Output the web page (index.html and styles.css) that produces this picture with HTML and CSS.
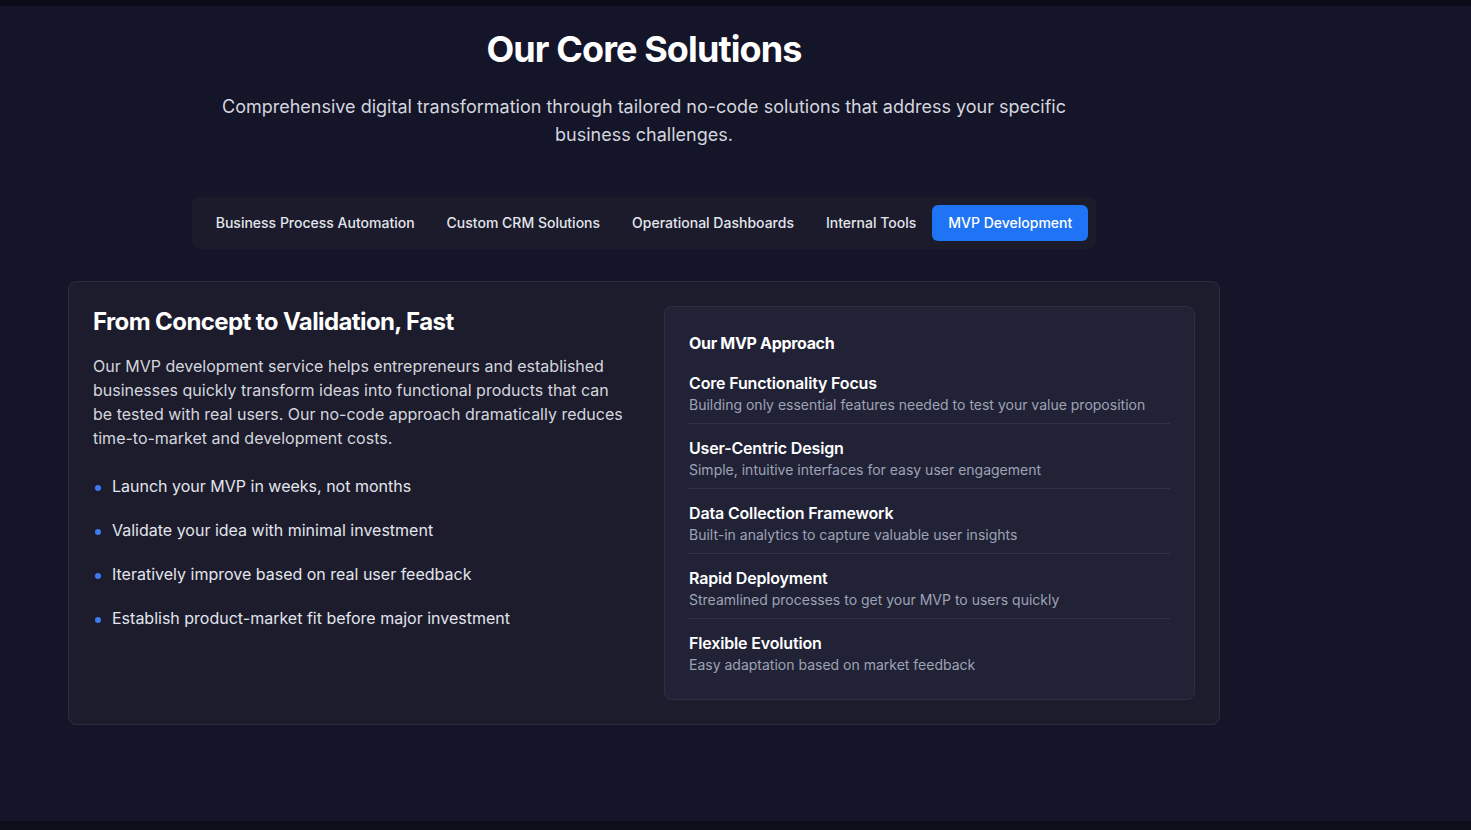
FILE: index.html
```html
<!DOCTYPE html>
<html lang="en">
<head>
<meta charset="utf-8">
<title>Our Core Solutions</title>
<link rel="stylesheet" href="styles.css">
</head>
<body>
<div class="topstrip"></div>
<section class="solutions">
  <div class="container">
    <h1 class="title">Our Core Solutions</h1>
    <p class="subtitle">Comprehensive digital transformation through tailored no-code solutions that address your specific business challenges.</p>
    <div class="tabs-wrap">
      <div class="tabs">
        <button class="tab">Business Process Automation</button>
        <button class="tab">Custom CRM Solutions</button>
        <button class="tab">Operational Dashboards</button>
        <button class="tab">Internal Tools</button>
        <button class="tab active">MVP Development</button>
      </div>
    </div>
    <div class="card">
      <div class="left">
        <h2 class="card-title">From Concept to Validation, Fast</h2>
        <p class="card-text">Our MVP development service helps entrepreneurs and established businesses quickly transform ideas into functional products that can be tested with real users. Our no-code approach dramatically reduces time-to-market and development costs.</p>
        <ul class="benefits">
          <li><span class="dot"></span><span>Launch your MVP in weeks, not months</span></li>
          <li><span class="dot"></span><span>Validate your idea with minimal investment</span></li>
          <li><span class="dot"></span><span>Iteratively improve based on real user feedback</span></li>
          <li><span class="dot"></span><span>Establish product-market fit before major investment</span></li>
        </ul>
      </div>
      <div class="approach">
        <h3 class="approach-title">Our MVP Approach</h3>
        <div class="item">
          <div class="item-title">Core Functionality Focus</div>
          <div class="item-desc">Building only essential features needed to test your value proposition</div>
        </div>
        <div class="item">
          <div class="item-title">User-Centric Design</div>
          <div class="item-desc">Simple, intuitive interfaces for easy user engagement</div>
        </div>
        <div class="item">
          <div class="item-title">Data Collection Framework</div>
          <div class="item-desc">Built-in analytics to capture valuable user insights</div>
        </div>
        <div class="item">
          <div class="item-title">Rapid Deployment</div>
          <div class="item-desc">Streamlined processes to get your MVP to users quickly</div>
        </div>
        <div class="item">
          <div class="item-title">Flexible Evolution</div>
          <div class="item-desc">Easy adaptation based on market feedback</div>
        </div>
      </div>
    </div>
  </div>
</section>
<div class="bottomstrip"></div>
</body>
</html>
```

FILE: styles.css
```css
* { box-sizing: border-box; }
html, body { margin: 0; padding: 0; }
body {
  background: #141528;
  font-family: Inter, "Noto Sans", sans-serif;
  color: #ffffff;
  height: 830px;
  overflow: hidden;
  display: flex;
  flex-direction: column;
}
.topstrip { height: 6px; background: #0c0c19; flex: none; }
.bottomstrip { height: 9px; background: #0f0f1b; flex: none; }
.solutions { flex: 1; padding-top: 23px; }
.container { width: 1152px; margin-left: 68px; }
.title {
  margin: 0;
  text-align: center;
  font-size: 36px;
  line-height: 40px;
  font-weight: 700;
  letter-spacing: -0.025em;
  color: #ffffff;
}
.subtitle {
  margin: 24px auto 0;
  max-width: 896px;
  text-align: center;
  font-size: 18px;
  line-height: 28px;
  color: #d4d6de;
}
.tabs-wrap { display: flex; justify-content: center; margin-top: 48px; }
.tabs {
  display: flex;
  padding: 8px;
  background: #1b1b2b;
  border-radius: 8px;
}
.tab {
  font-family: inherit;
  font-size: 14px;
  line-height: 20px;
  font-weight: 500;
  color: #e3e5ec;
  background: transparent;
  border: 0;
  padding: 8px 16px;
  border-radius: 6px;
  cursor: pointer;
}
.tab.active { background: #1f74f5; color: #ffffff; }
.card {
  margin-top: 32px;
  background: #1c1c2c;
  border: 1px solid #2a2b3e;
  border-radius: 8px;
  padding: 24px;
  display: grid;
  grid-template-columns: 1fr 1fr;
  gap: 40px;
  align-items: start;
}
.card-title {
  margin: 0;
  font-size: 24px;
  line-height: 32px;
  font-weight: 700;
  letter-spacing: -0.025em;
}
.card-text {
  margin: 16px 0 0;
  font-size: 16px;
  line-height: 24px;
  color: #d4d6de;
}
.benefits { list-style: none; margin: 24px 0 0; padding: 0; display: flex; flex-direction: column; gap: 20px; }
.benefits li {
  display: flex;
  align-items: flex-start;
  font-size: 16px;
  line-height: 24px;
  color: #e3e5ec;
}
.dot {
  flex: none;
  width: 6px;
  height: 6px;
  border-radius: 50%;
  background: #3b7cf2;
  margin: 11px 11px 0 2px;
}
.approach {
  background: #212236;
  border: 1px solid #2d2e44;
  border-radius: 8px;
  padding: 24px;
}
.approach-title {
  margin: 0 0 16px;
  font-size: 16px;
  line-height: 24px;
  font-weight: 700;
  letter-spacing: -0.02em;
}
.item { padding-bottom: 8px; border-bottom: 1px solid #303247; }
.item + .item { margin-top: 12px; }
.item:last-child { padding-bottom: 0; border-bottom: 0; }
.item-title { font-size: 16px; line-height: 24px; font-weight: 600; letter-spacing: -0.01em; color: #ffffff; }
.item-desc { font-size: 14px; line-height: 20px; color: #9ea3b5; }
```
